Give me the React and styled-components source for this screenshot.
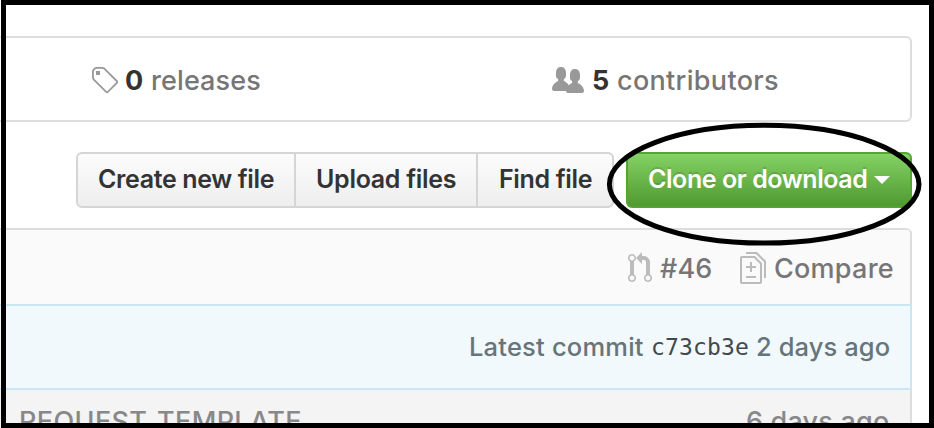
import React from "react";
import styled, { createGlobalStyle } from "styled-components";

const GlobalStyle = createGlobalStyle`
  * { box-sizing: border-box; }
  body { margin: 0; overflow: hidden; background: #fff; }
`;

const Page = styled.main`
  position: relative;
  width: 934px;
  height: 428px;
  overflow: hidden;
  background: #fff;
  padding: 36px 22px 0 0;
  font-family: Inter, "Liberation Sans", sans-serif;
  font-size: 27px;
  font-weight: 450;
  color: #767676;
`;

const Summary = styled.section`
  display: grid;
  grid-template-columns: 460px 1fr;
  height: 86px;
  border: 2px solid #ddd;
  border-left: 0;
  border-radius: 0 6px 6px 0;
`;

const Stat = styled.div`
  display: flex;
  align-items: center;
  padding: 3px 0 0 ${(p) => p.$inset}px;
`;

const Icon = styled.svg`
  flex: none;
  display: block;
  fill: ${(p) => p.$color};
  margin-right: ${(p) => p.$gap}px;
`;

const Text = styled.span`
  white-space: pre;
  line-height: 34px;
  letter-spacing: ${(p) => p.$track || 0}px;
  padding-top: ${(p) => p.$drop || 0}px;
`;

const Count = styled(Text)`
  color: #333;
  font-weight: 650;
  width: ${(p) => p.$width}px;
`;

const Actions = styled.div`
  display: flex;
  gap: 12px;
  margin: 30px 0 20px 76px;
`;

const ButtonGroup = styled.div`
  display: flex;
  width: 538px;
  height: 56px;
  border: 2px solid #d5d5d5;
  border-radius: 6px;
  background: linear-gradient(#fcfcfc, #eee);
`;

const Button = styled.button`
  width: ${(p) => p.$width}px;
  padding: 0 0 3px ${(p) => p.$inset}px;
  border: 0;
  border-right: ${(p) => (p.$last ? 0 : 2)}px solid #d5d5d5;
  background: none;
  text-align: left;
  font: 630 25px Inter, sans-serif;
  color: #333;
`;

const CloneButton = styled.button`
  display: flex;
  align-items: center;
  width: 286px;
  height: 56px;
  padding: 0 0 3px 20px;
  border: 2px solid #55a532;
  border-radius: 6px;
  background: linear-gradient(#84d164, #509a31);
  font: 630 25px Inter, sans-serif;
  color: #fff;
  text-shadow: 0 -2px 0 rgba(0, 0, 0, 0.15);
`;

const Caret = styled.span`
  margin: 2px 0 0 7px;
  border: 8px solid transparent;
  border-top-color: #fff;
  border-bottom: 0;
`;

const Files = styled.section`
  height: 220px;
  border: 2px solid #ddd;
  border-width: 2px 0 0;
  border-radius: 0 6px 0 0;
`;

const CompareBar = styled.div`
  display: flex;
  align-items: center;
  height: 74px;
  padding: 2px 0 0 628px;
  background: #fafafa;
  border-right: 2px solid #ddd;
  border-top-right-radius: 4px;
`;

const CommitRow = styled.div`
  display: flex;
  align-items: center;
  height: 86px;
  padding: 0 0 0 469px;
  border: 2px solid #c9e6f2;
  border-left: 0;
  background: #f2f9fc;
  color: #67757b;
  font-size: 25.5px;
`;

const Hash = styled.code`
  width: 105px;
  font: 23px/34px "DejaVu Sans Mono", monospace;
  letter-spacing: 0.15px;
  color: #42494c;
`;

const Lead = styled(Text)`
  width: ${(p) => p.$width}px;
`;

const FileRow = styled.div`
  display: flex;
  height: 60px;
  padding: 15px 0 0 19px;
  border-right: 2px solid #ddd;
  background: #f4f4f4;
  color: #888;
`;

const Frame = styled.div`
  position: absolute;
  inset: 0 0 0 1px;
  border: 5px solid #000;
`;

const Callout = styled.svg`
  position: absolute;
  left: 600px;
  top: 116px;
  fill: none;
  stroke: #000;
  stroke-width: 5;
`;

const TagIcon = (p) => (
  <Icon width="28" height="32" viewBox="0 0 14 16" {...p}>
    <path fillRule="evenodd" d="M7.73 1.73C7.26 1.26 6.62 1 5.96 1H3.5C2.13 1 1 2.13 1 3.5v2.47c0 .66.27 1.3.73 1.77l6.06 6.06c.39.39 1.02.39 1.41 0l4.59-4.59a.996.996 0 0 0 0-1.41L7.73 1.73zM2.38 7.09c-.31-.3-.47-.7-.47-1.13V3.5c0-.88.72-1.59 1.59-1.59h2.47c.42 0 .83.16 1.13.47l6.14 6.13-4.73 4.73-6.13-6.15zM3.01 3h2v2H3V3h.01z" />
  </Icon>
);

const PeopleIcon = (p) => (
  <Icon width="32" height="32" viewBox="0 0 16 16" {...p}>
    <path d="M16 12.999c0 .439-.45 1-1 1H7.995c-.539 0-.994-.447-.995-.999H1c-.54 0-1-.561-1-1 0-2.634 3-4 3-4s.229-.409 0-1c-.841-.621-1.058-.59-1-3 .058-2.419 1.367-3 2.5-3s2.442.58 2.5 3c.058 2.41-.159 2.379-1 3-.229.59 0 1 0 1s1.549.711 2.42 2.088C9.196 9.369 10 8.999 10 8.999s.229-.409 0-1c-.841-.62-1.058-.59-1-3 .058-2.419 1.367-3 2.5-3s2.437.581 2.495 3c.059 2.41-.158 2.38-1 3-.229.59 0 1 0 1s3.005 1.366 3.005 4" />
  </Icon>
);

const PullRequestIcon = (p) => (
  <Icon width="24" height="32" viewBox="0 0 12 16" {...p}>
    <path fillRule="evenodd" d="M11 11.28V5c-.03-.78-.34-1.47-.94-2.06C9.46 2.35 8.78 2.03 8 2H7V0L4 3l3 3V4h1c.27.02.48.11.69.31.21.2.3.42.31.69v6.28A1.993 1.993 0 0 0 10 15a1.993 1.993 0 0 0 1-3.72zm-1 2.92c-.66 0-1.2-.55-1.2-1.2 0-.65.55-1.2 1.2-1.2.65 0 1.2.55 1.2 1.2 0 .65-.55 1.2-1.2 1.2zM4 3c0-1.11-.89-2-2-2a1.993 1.993 0 0 0-1 3.72v6.56A1.993 1.993 0 0 0 2 15a1.993 1.993 0 0 0 1-3.72V4.72c.59-.34 1-.98 1-1.72zm-.8 10c0 .66-.55 1.2-1.2 1.2-.65 0-1.2-.55-1.2-1.2 0-.65.55-1.2 1.2-1.2.65 0 1.2.55 1.2 1.2zM2 4.2C1.34 4.2.8 3.65.8 3c0-.65.55-1.2 1.2-1.2.65 0 1.2.55 1.2 1.2 0 .65-.55 1.2-1.2 1.2z" />
  </Icon>
);

const DiffIcon = (p) => (
  <Icon width="26" height="32" viewBox="0 0 13 16" {...p}>
    <path fillRule="evenodd" d="M6 7h2v1H6v2H5V8H3V7h2V5h1v2zm-3 6h5v-1H3v1zM7.5 2L11 5.5V15c0 .55-.45 1-1 1H1c-.55 0-1-.45-1-1V3c0-.55.45-1 1-1h6.5zM10 6L7 3H1v12h9V6zM8.5 0H3v1h5l4 4v8h1V4.5L8.5 0z" />
  </Icon>
);

export default function App() {
  return (
    <Page>
      <GlobalStyle />
      <Summary>
        <Stat $inset={90}>
          <TagIcon $color="#999" $gap={7} />
          <Count $width={26}>0</Count>
          <Text $track={0.1}>releases</Text>
        </Stat>
        <Stat $inset={92}>
          <PeopleIcon $color="#999" $gap={8} />
          <Count $width={25}>5</Count>
          <Text $track={0.32}>contributors</Text>
        </Stat>
      </Summary>
      <Actions>
        <ButtonGroup>
          <Button $width={218} $inset={20}><Text $track={-0.36}>Create new file</Text></Button>
          <Button $width={182} $inset={20}><Text $track={-0.3}>Upload files</Text></Button>
          <Button $width={134} $inset={21} $last><Text $track={-0.33}>Find file</Text></Button>
        </ButtonGroup>
        <CloneButton><Text $track={-0.43}>Clone or download</Text><Caret /></CloneButton>
      </Actions>
      <Files>
        <CompareBar>
          <PullRequestIcon $color="#bbb" $gap={8} />
          <Lead $width={80} $track={0.2} $drop={2}>#46</Lead>
          <DiffIcon $color="#bbb" $gap={8} />
          <Text $track={0.25} $drop={2}>Compare</Text>
        </CompareBar>
        <CommitRow>
          <Lead $width={182} $track={0.2}>Latest commit</Lead>
          <Hash>c73cb3e</Hash>
          <Text $track={0.1}>2 days ago</Text>
        </CommitRow>
        <FileRow>
          <Lead $width={727} $track={0.35}>REQUEST_TEMPLATE</Lead>
          <Text $track={0.2}>6 days ago</Text>
        </FileRow>
      </Files>
      <Callout width="330" height="136">
        <ellipse cx="164.2" cy="68.2" rx="154.8" ry="58.9" />
      </Callout>
      <Frame />
    </Page>
  );
}
